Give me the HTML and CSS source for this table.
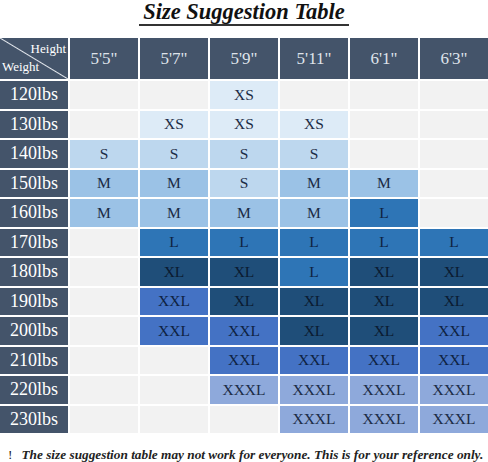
FILE: index.html
```html
<!DOCTYPE html>
<html lang="en">
<head>
    <meta charset="UTF-8">
    <title>Size Suggestion Table</title>
    <link rel="stylesheet" href="styles.css">
</head>
<body>
    <div class="title"><span>Size Suggestion Table</span></div>

    <div class="size-table">
        <!-- header row -->
        <div class="corner">
            <span class="h-lbl">Height</span>
            <span class="w-lbl">Weight</span>
        </div>
        <div class="head">5'5"</div>
        <div class="head">5'7"</div>
        <div class="head">5'9"</div>
        <div class="head">5'11"</div>
        <div class="head">6'1"</div>
        <div class="head">6'3"</div>

        <div class="weight">120lbs</div>
        <div class="cell"></div><div class="cell"></div><div class="cell xs">XS</div><div class="cell"></div><div class="cell"></div><div class="cell"></div>

        <div class="weight">130lbs</div>
        <div class="cell"></div><div class="cell xs">XS</div><div class="cell xs">XS</div><div class="cell xs">XS</div><div class="cell"></div><div class="cell"></div>

        <div class="weight">140lbs</div>
        <div class="cell s">S</div><div class="cell s">S</div><div class="cell s">S</div><div class="cell s">S</div><div class="cell"></div><div class="cell"></div>

        <div class="weight">150lbs</div>
        <div class="cell m">M</div><div class="cell m">M</div><div class="cell s">S</div><div class="cell m">M</div><div class="cell m">M</div><div class="cell"></div>

        <div class="weight">160lbs</div>
        <div class="cell m">M</div><div class="cell m">M</div><div class="cell m">M</div><div class="cell m">M</div><div class="cell l">L</div><div class="cell"></div>

        <div class="weight">170lbs</div>
        <div class="cell"></div><div class="cell l">L</div><div class="cell l">L</div><div class="cell l">L</div><div class="cell l">L</div><div class="cell l">L</div>

        <div class="weight">180lbs</div>
        <div class="cell"></div><div class="cell xl">XL</div><div class="cell xl">XL</div><div class="cell l">L</div><div class="cell xl">XL</div><div class="cell xl">XL</div>

        <div class="weight">190lbs</div>
        <div class="cell"></div><div class="cell xxl">XXL</div><div class="cell xl">XL</div><div class="cell xl">XL</div><div class="cell xl">XL</div><div class="cell xl">XL</div>

        <div class="weight">200lbs</div>
        <div class="cell"></div><div class="cell xxl">XXL</div><div class="cell xxl">XXL</div><div class="cell xl">XL</div><div class="cell xl">XL</div><div class="cell xxl">XXL</div>

        <div class="weight">210lbs</div>
        <div class="cell"></div><div class="cell"></div><div class="cell xxl">XXL</div><div class="cell xxl">XXL</div><div class="cell xxl">XXL</div><div class="cell xxl">XXL</div>

        <div class="weight">220lbs</div>
        <div class="cell"></div><div class="cell"></div><div class="cell xxxl">XXXL</div><div class="cell xxxl">XXXL</div><div class="cell xxxl">XXXL</div><div class="cell xxxl">XXXL</div>

        <div class="weight">230lbs</div>
        <div class="cell"></div><div class="cell"></div><div class="cell"></div><div class="cell xxxl">XXXL</div><div class="cell xxxl">XXXL</div><div class="cell xxxl">XXXL</div>
    </div>

    <p class="note"><span class="bang">!</span>The size suggestion table may not work for everyone. This is for your reference only.</p>
</body>
</html>
```

FILE: styles.css
```css
* {
    margin: 0;
    padding: 0;
    box-sizing: border-box;
}

body {
    width: 488px;
    background-color: #fff;
    font-family: "Liberation Serif", serif;
    color: #1b2b45;
}

.title {
    height: 38px;
    display: flex;
    justify-content: center;
    padding-top: 1px;
}

.title span {
    font-size: 22.5px;
    font-weight: bold;
    font-style: italic;
    color: #111;
    line-height: 22px;
    padding: 0 4px 1px;
    border-bottom: 2px solid #333;
    height: 25px;
}

/* main grid */
.size-table {
    display: grid;
    grid-template-columns: repeat(7, 68px);
    grid-template-rows: 41px repeat(12, 27.5px);
    gap: 2px;
    background-color: #fff;
}

.corner {
    position: relative;
    background: linear-gradient(to top right, #44546a calc(50% - 1px), #e4e8ee 50%, #44546a calc(50% + 1px));
    color: #fff;
    font-size: 13px;
}

.h-lbl {
    position: absolute;
    top: 3px;
    right: 2px;
}

.w-lbl {
    position: absolute;
    bottom: 4px;
    left: 2px;
}

.head {
    background-color: #44546a;
    color: #dfe3ea;
    font-size: 17px;
    display: flex;
    align-items: center;
    justify-content: center;
}

.weight {
    background-color: #44546a;
    color: #fff;
    font-size: 18px;
    display: flex;
    align-items: center;
    justify-content: center;
}

.cell {
    background-color: #f2f2f2;
    font-size: 15.5px;
    display: flex;
    align-items: center;
    justify-content: center;
}

.xs { background-color: #ddebf7; }
.s { background-color: #bdd7ee; }
.m { background-color: #9bc2e6; }
.l { background-color: #2e75b6; color: #0e2240; }
.xl { background-color: #1f4e79; color: #0b1a30; }
.xxl { background-color: #4472c4; color: #0e2240; }
.xxxl { background-color: #8ea9db; }

.note {
    margin-top: 14px;
    font-size: 13.3px;
    font-weight: bold;
    font-style: italic;
    color: #222;
    white-space: nowrap;
    padding-left: 8px;
}

.bang {
    font-style: normal;
    font-weight: normal;
    margin-right: 9px;
}
```
